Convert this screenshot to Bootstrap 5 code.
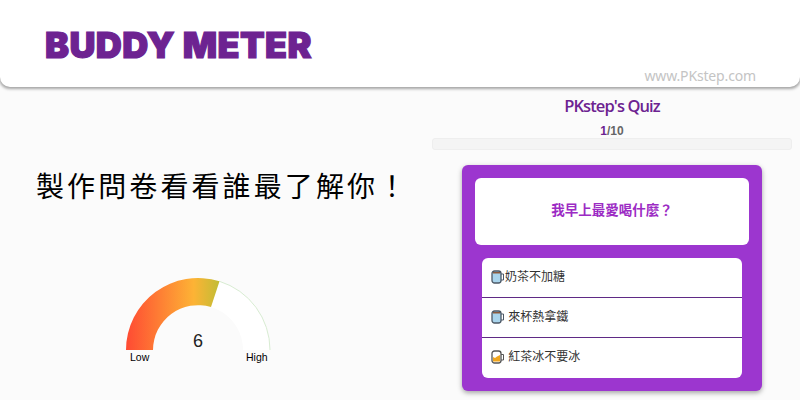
<!doctype html>
<html lang="zh-Hant"><head><meta charset="utf-8"><title>Buddy Meter</title>
<link href="https://cdn.jsdelivr.net/npm/bootstrap@5.3.0/dist/css/bootstrap.min.css" rel="stylesheet">
<style>
html,body{height:400px;overflow:hidden}
body{background:#fbfbfb;font-family:"Liberation Sans","Noto Sans CJK TC",sans-serif;color:#333}
.top-bar{height:87px;background:#fff;border-radius:0 0 10px 10px;box-shadow:0 1px 3px 1px rgba(0,0,0,.35);padding:25px 44px 0 45px}
.brand-name{font-family:Inter,sans-serif;font-weight:900;font-size:36px;line-height:40px;color:#6d2391;-webkit-text-stroke:1.2px #6d2391;letter-spacing:.4px;margin:0;white-space:nowrap}
.site-url{font-family:"Noto Sans",sans-serif;font-size:14px;line-height:20px;color:#c4c4c4;letter-spacing:-.15px;margin-top:1px;text-align:right}
.main-area{height:313px}
.left-pane{width:432px;padding-top:80px}
.slogan{font-family:"Noto Sans CJK TC",sans-serif;font-size:28px;font-weight:400;line-height:36px;color:#000;letter-spacing:3.1px;margin:0 0 0 36px;white-space:nowrap}
.gauge-box{position:relative;width:150px;height:95px;margin:62px 0 0 123px}
.gauge-num{position:absolute;left:0;width:150px;top:66px;text-align:center;font-size:18px;line-height:20px;color:#222}
.gauge-low,.gauge-high{position:absolute;top:85px;font-size:10.5px;line-height:14px;color:#000}
.gauge-low{left:7px}.gauge-high{left:123px}
.right-pane{width:360px;padding-top:8px}
.quiz-title{font-family:"Open Sans",sans-serif;font-size:16.500px;line-height:22px;font-weight:600;color:#6d2391;text-align:center;margin:0;letter-spacing:-.9px}
.quiz-step{font-size:12px;line-height:14px;font-weight:700;color:#666;text-align:center;margin-top:7px;margin-bottom:0}
.quiz-step b{color:#6d2391}
.step-track{height:12px;background:#f4f4f4;border:1px solid #eee;border-radius:3px}
.quiz-card{width:300px;height:226px;margin:15px 0 0 30px;background:#9c36cf;border-radius:6px;box-shadow:0 2px 5px rgba(0,0,0,.35);padding:13px}
.question-box{height:67px;background:#fff;border-radius:6px;color:#9c2bc4;font-size:13.500px;font-weight:700}
.answer-list{margin:13px 7px 0;border-radius:6px;overflow:hidden}
.answer-row{height:40px;background:#fff;border-bottom:1px solid #5f2a85;font-size:12px;color:#333;padding:0 0 2px 9px}
.answer-row:last-child{border-bottom:0}
.answer-row svg{flex:none;margin-right:1px}
</style></head><body>
<header class="top-bar">
<h1 class="brand-name">BUDDY METER</h1>
<div class="site-url">www.PKstep.com</div>
</header>
<main class="main-area d-flex">
<section class="left-pane">
<h2 class="slogan">製作問卷看看誰最了解你！</h2>
<div class="gauge-box">
<svg width="150" height="95" viewBox="0 0 150 95"><defs><linearGradient id="hot" gradientUnits="userSpaceOnUse" x1="3" y1="0" x2="97" y2="0"><stop offset="0" stop-color="#ff4a33"/><stop offset=".72" stop-color="#fdb335"/><stop offset="1" stop-color="#c0bd35"/></linearGradient></defs>
<path d="M3 85A72 72 0 0 1 147 85H120A45 45 0 0 0 30 85Z" fill="#fff"/>
<path d="M147 85A72 72 0 0 0 96.500 16.300" fill="none" stroke="#d8ecd2" stroke-width="1"/>
<path d="M3 85A72 72 0 0 1 96.500 16.300L88 42.100A45 45 0 0 0 30 85Z" fill="url(#hot)"/></svg>
<div class="gauge-num">6</div><div class="gauge-low">Low</div><div class="gauge-high">High</div>
</div>
</section>
<section class="right-pane">
<h2 class="quiz-title">PKstep's Quiz</h2>
<div class="quiz-step"><b>1</b>/10</div>
<div class="step-track"></div>
<div class="quiz-card">
<div class="question-box d-flex align-items-center justify-content-center">我早上最愛喝什麼？</div>
<div class="answer-list">
<div class="answer-row d-flex align-items-center"><svg width="13" height="14" viewBox="0 0 13 14"><rect x="1" y="1" width="9" height="12" rx="2.500" fill="#a9d4ec" stroke="#4c5866" stroke-width="1.300"/><path d="M2 2.800H9" stroke="#8b5a3c" stroke-width="1.500"/><path d="M10 4H12.500V10H10" fill="none" stroke="#4c5866"/></svg><span>奶茶不加糖</span></div>
<div class="answer-row d-flex align-items-center"><svg width="13" height="14" viewBox="0 0 13 14"><rect x="1" y="1" width="9" height="12" rx="2.500" fill="#a9d4ec" stroke="#4c5866" stroke-width="1.300"/><path d="M2 2.800H9" stroke="#8b5a3c" stroke-width="1.500"/><path d="M10 4H12.500V10H10" fill="none" stroke="#4c5866"/></svg><span>&nbsp;來杯熱拿鐵</span></div>
<div class="answer-row d-flex align-items-center"><svg width="13" height="14" viewBox="0 0 13 14"><rect x="1" y="1" width="9" height="12" rx="2.500" fill="#fff" stroke="#555" stroke-width="1.300"/><path d="M2 7L4 8L6 6.500L9 5V11.500H2Z" fill="#f0a51e"/><path d="M10 4.500H12.500V10H10" fill="none" stroke="#555"/></svg><span>&nbsp;紅茶冰不要冰</span></div>
</div>
</div>
</section>
</main>
</body></html>
